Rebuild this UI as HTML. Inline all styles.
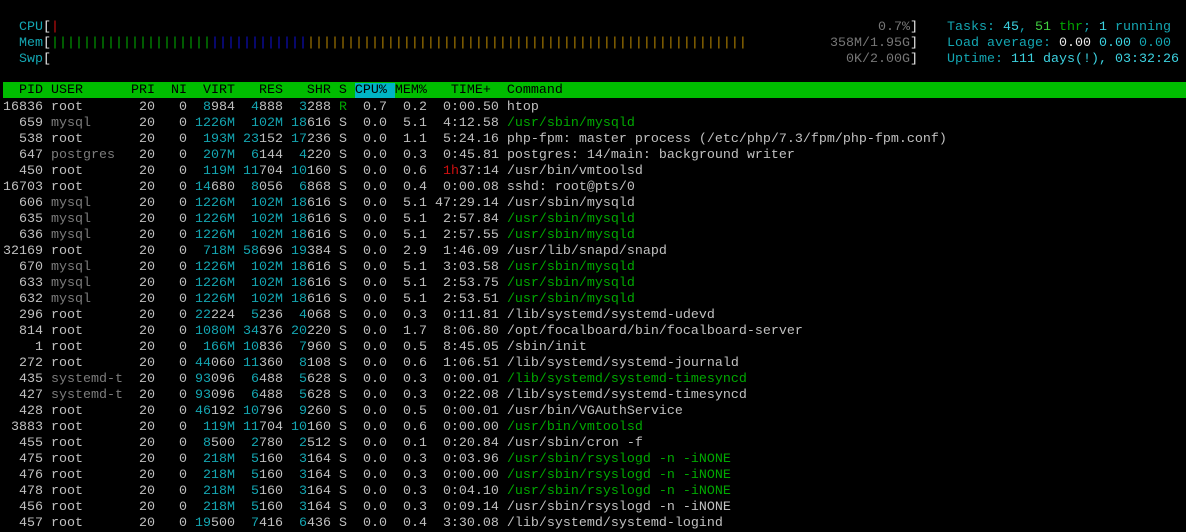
<!DOCTYPE html>
<html><head><meta charset="utf-8"><style>
html,body{margin:0;padding:0;background:#000;}
body{width:1186px;height:531px;overflow:hidden;position:relative;font-family:"Liberation Mono",monospace;font-size:13.33px;color:#c0c0c0;}
pre{margin:0;font:inherit;line-height:16px;white-space:pre;position:absolute;}
.t{color:#14a6b2}.c{color:#3cd2e0}.u{color:#7c7c7c}.g{color:#00a800}.G{color:#40d040}.r{color:#d01010}.b{color:#1010c8}.y{color:#b08000}.w{color:#e8e8e8}.v{color:#767676}
#hdr{position:absolute;left:3px;right:0;top:82px;height:16px;background:#00bc00;}
#hdr pre{color:#000;left:0;top:1px}
.hl{background:#00b4c4}
</style></head><body>
<pre style="left:3px;top:20px"><span class="t">  CPU</span><span class="w">[</span><span class="r">|</span>
<span class="t">  Mem</span><span class="w">[</span><span class="g">||||||||||||||||||||</span><span class="b">||||||||||||</span><span class="y">|||||||||||||||||||||||||||||||||||||||||||||||||||||||</span>
<span class="t">  Swp</span><span class="w">[</span></pre>
<pre style="right:268px;top:20px;text-align:right"><span class="v">0.7%</span><span class="w">]</span>
<span class="v">358M/1.95G</span><span class="w">]</span>
<span class="v">0K/2.00G</span><span class="w">]</span></pre>
<pre style="left:947px;top:20px"><span class="t">Tasks: </span><span class="c">45</span><span class="t">, </span><span class="G">51</span><span class="g"> thr</span><span class="t">; </span><span class="c">1</span><span class="t"> running</span>
<span class="t">Load average: </span><span class="w">0.00 </span><span class="c">0.00 </span><span class="t">0.00</span>
<span class="t">Uptime: </span><span class="c">111 days(!), 03:32:26</span></pre>
<div id="hdr"><pre>  PID USER      PRI  NI  VIRT   RES   SHR S <span class="hl">CPU% </span>MEM%   TIME+  Command</pre></div>
<pre style="left:3px;top:100px">16836 root       20   0  <span class="t">8</span>984  <span class="t">4</span>888  <span class="t">3</span>288 <span class="g">R</span>  0.7  0.2  0:00.50 htop
  659 <span class="u">mysql</span>      20   0 <span class="t">1226M  102M 18</span>616 S  0.0  5.1  4:12.58 <span class="g">/usr/sbin/mysqld</span>
  538 root       20   0  <span class="t">193M 23</span>152 <span class="t">17</span>236 S  0.0  1.1  5:24.16 php-fpm: master process (/etc/php/7.3/fpm/php-fpm.conf)
  647 <span class="u">postgres</span>   20   0  <span class="t">207M  6</span>144  <span class="t">4</span>220 S  0.0  0.3  0:45.81 postgres: 14/main: background writer
  450 root       20   0  <span class="t">119M 11</span>704 <span class="t">10</span>160 S  0.0  0.6  <span class="r">1h</span>37:14 /usr/bin/vmtoolsd
16703 root       20   0 <span class="t">14</span>680  <span class="t">8</span>056  <span class="t">6</span>868 S  0.0  0.4  0:00.08 sshd: root@pts/0
  606 <span class="u">mysql</span>      20   0 <span class="t">1226M  102M 18</span>616 S  0.0  5.1 47:29.14 /usr/sbin/mysqld
  635 <span class="u">mysql</span>      20   0 <span class="t">1226M  102M 18</span>616 S  0.0  5.1  2:57.84 <span class="g">/usr/sbin/mysqld</span>
  636 <span class="u">mysql</span>      20   0 <span class="t">1226M  102M 18</span>616 S  0.0  5.1  2:57.55 <span class="g">/usr/sbin/mysqld</span>
32169 root       20   0  <span class="t">718M 58</span>696 <span class="t">19</span>384 S  0.0  2.9  1:46.09 /usr/lib/snapd/snapd
  670 <span class="u">mysql</span>      20   0 <span class="t">1226M  102M 18</span>616 S  0.0  5.1  3:03.58 <span class="g">/usr/sbin/mysqld</span>
  633 <span class="u">mysql</span>      20   0 <span class="t">1226M  102M 18</span>616 S  0.0  5.1  2:53.75 <span class="g">/usr/sbin/mysqld</span>
  632 <span class="u">mysql</span>      20   0 <span class="t">1226M  102M 18</span>616 S  0.0  5.1  2:53.51 <span class="g">/usr/sbin/mysqld</span>
  296 root       20   0 <span class="t">22</span>224  <span class="t">5</span>236  <span class="t">4</span>068 S  0.0  0.3  0:11.81 /lib/systemd/systemd-udevd
  814 root       20   0 <span class="t">1080M 34</span>376 <span class="t">20</span>220 S  0.0  1.7  8:06.80 /opt/focalboard/bin/focalboard-server
    1 root       20   0  <span class="t">166M 10</span>836  <span class="t">7</span>960 S  0.0  0.5  8:45.05 /sbin/init
  272 root       20   0 <span class="t">44</span>060 <span class="t">11</span>360  <span class="t">8</span>108 S  0.0  0.6  1:06.51 /lib/systemd/systemd-journald
  435 <span class="u">systemd-t</span>  20   0 <span class="t">93</span>096  <span class="t">6</span>488  <span class="t">5</span>628 S  0.0  0.3  0:00.01 <span class="g">/lib/systemd/systemd-timesyncd</span>
  427 <span class="u">systemd-t</span>  20   0 <span class="t">93</span>096  <span class="t">6</span>488  <span class="t">5</span>628 S  0.0  0.3  0:22.08 /lib/systemd/systemd-timesyncd
  428 root       20   0 <span class="t">46</span>192 <span class="t">10</span>796  <span class="t">9</span>260 S  0.0  0.5  0:00.01 /usr/bin/VGAuthService
 3883 root       20   0  <span class="t">119M 11</span>704 <span class="t">10</span>160 S  0.0  0.6  0:00.00 <span class="g">/usr/bin/vmtoolsd</span>
  455 root       20   0  <span class="t">8</span>500  <span class="t">2</span>780  <span class="t">2</span>512 S  0.0  0.1  0:20.84 /usr/sbin/cron -f
  475 root       20   0  <span class="t">218M  5</span>160  <span class="t">3</span>164 S  0.0  0.3  0:03.96 <span class="g">/usr/sbin/rsyslogd -n -iNONE</span>
  476 root       20   0  <span class="t">218M  5</span>160  <span class="t">3</span>164 S  0.0  0.3  0:00.00 <span class="g">/usr/sbin/rsyslogd -n -iNONE</span>
  478 root       20   0  <span class="t">218M  5</span>160  <span class="t">3</span>164 S  0.0  0.3  0:04.10 <span class="g">/usr/sbin/rsyslogd -n -iNONE</span>
  456 root       20   0  <span class="t">218M  5</span>160  <span class="t">3</span>164 S  0.0  0.3  0:09.14 /usr/sbin/rsyslogd -n -iNONE
  457 root       20   0 <span class="t">19</span>500  <span class="t">7</span>416  <span class="t">6</span>436 S  0.0  0.4  3:30.08 /lib/systemd/systemd-logind</pre>
</body></html>
